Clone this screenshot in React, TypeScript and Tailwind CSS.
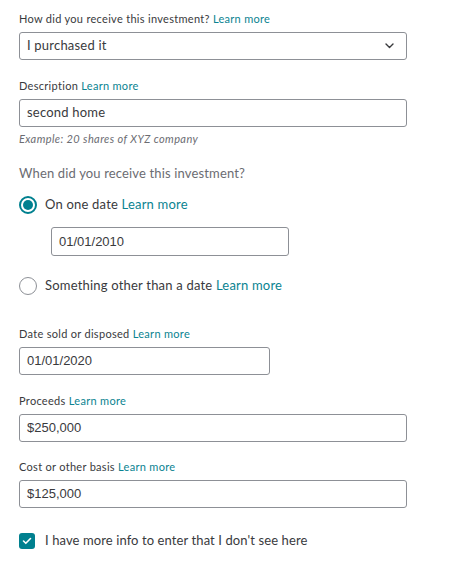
import React from "react";

const LINK = "text-[#0a8391]";

function Label({ text }: { text: string }) {
  return (
    <div className="text-[11px] leading-4 tracking-[0.3px] text-[#393a3d]">
      {text} <span className={LINK}>Learn more</span>
    </div>
  );
}

function Field({ value, w = "w-[388px]" }: { value: string; w?: string }) {
  return (
    <div
      className={`${w} h-[28px] mt-[5px] border border-[#8d9096] rounded-[3px] flex items-center px-[7px] text-[13px] text-[#393a3d] font-['Liberation_Sans',sans-serif]`}
    >
      {value}
    </div>
  );
}

export default function App() {
  return (
    <div className="w-[452px] h-[573px] bg-white font-['Lato',sans-serif] pl-[19px] pt-[11px]">
      <Label text="How did you receive this investment?" />
      <div className="w-[388px] h-[28px] mt-[5px] border border-[#8d9096] rounded-[3px] flex items-center justify-between pl-[7px] pr-[12px] text-[13px] tracking-[0.2px] text-[#393a3d]">
        <span>I purchased it</span>
        <svg width="9" height="6" viewBox="0 0 9 6" fill="none">
          <path d="M1 1l3.5 3.5L8 1" stroke="#393a3d" strokeWidth="1.4" strokeLinecap="round" strokeLinejoin="round" />
        </svg>
      </div>

      <div className="mt-[18px]">
        <Label text="Description" />
      </div>
      <div className="w-[388px] h-[28px] mt-[5px] border border-[#8d9096] rounded-[3px] flex items-center px-[7px] text-[13px] tracking-[0.2px] text-[#393a3d]">
        second home
      </div>
      <div className="mt-[5px] text-[11px] leading-[14px] tracking-[0.4px] italic text-[#6b6c72]">
        Example: 20 shares of XYZ company
      </div>

      <div className="mt-[18px] text-[13px] leading-[18px] tracking-[0.15px] text-[#6b6c72]">
        When did you receive this investment?
      </div>

      <div className="mt-[11px] h-[24px] flex items-center">
        <div className="w-[18px] h-[18px] rounded-full border-2 border-[#00808f] flex items-center justify-center">
          <div className="w-[10px] h-[10px] rounded-full bg-[#00808f]" />
        </div>
        <div className="ml-[8px] text-[13px] tracking-[0.2px] text-[#393a3d]">
          On one date <span className={LINK}>Learn more</span>
        </div>
      </div>
      <div className="pl-[32px] mt-[10px]">
        <div className="w-[238px] h-[29px] border border-[#8d9096] rounded-[3px] flex items-center px-[7px] text-[13px] text-[#393a3d] font-['Liberation_Sans',sans-serif]">
          01/01/2010
        </div>
      </div>

      <div className="mt-[18px] h-[24px] flex items-center">
        <div className="w-[18px] h-[18px] rounded-full border border-[#8d9096]" />
        <div className="ml-[8px] text-[13px] tracking-[0.2px] text-[#393a3d]">
          Something other than a date <span className={LINK}>Learn more</span>
        </div>
      </div>

      <div className="mt-[28px]">
        <Label text="Date sold or disposed" />
      </div>
      <Field value="01/01/2020" w="w-[251px]" />

      <div className="mt-[18px]">
        <Label text="Proceeds" />
      </div>
      <Field value="$250,000" />

      <div className="mt-[17px]">
        <Label text="Cost or other basis" />
      </div>
      <Field value="$125,000" />

      <div className="mt-[25px] flex items-center h-[16px]">
        <div className="w-[16px] h-[16px] rounded-[3px] bg-[#00808f] flex items-center justify-center">
          <svg width="10" height="8" viewBox="0 0 10 8" fill="none">
            <path d="M1.5 4l2.3 2.3L8.5 1.5" stroke="white" strokeWidth="1.6" strokeLinecap="round" strokeLinejoin="round" />
          </svg>
        </div>
        <div className="ml-[10px] text-[13px] tracking-[0.1px] text-[#393a3d]">I have more info to enter that I don't see here</div>
      </div>
    </div>
  );
}
